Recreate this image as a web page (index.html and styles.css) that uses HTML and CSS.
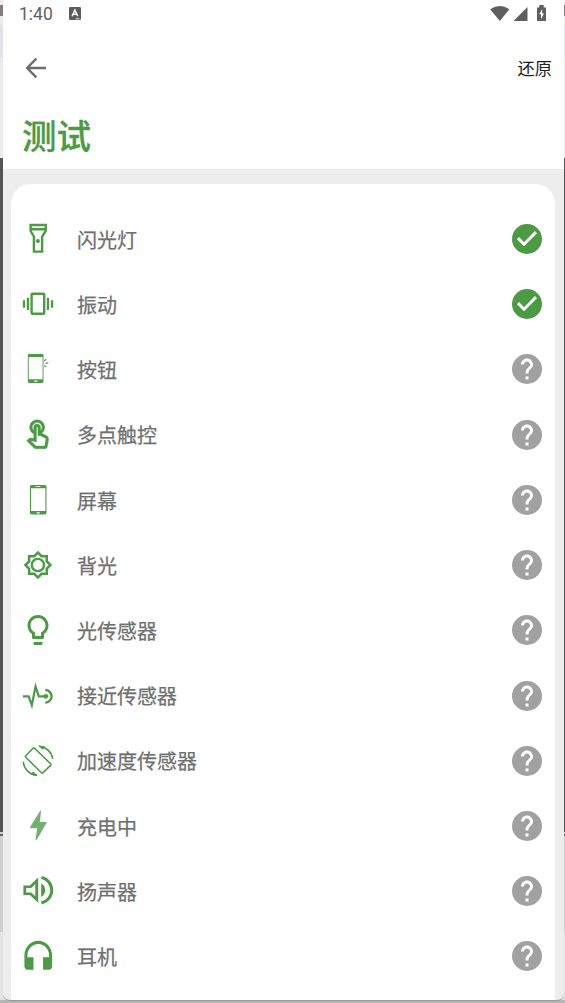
FILE: index.html
```html
<!DOCTYPE html>
<html lang="zh-CN">
<head>
<meta charset="utf-8">
<title>测试</title>
<link rel="stylesheet" href="styles.css">
</head>
<body>
<svg class="defs" aria-hidden="true">
  <symbol id="ok" viewBox="0 0 24 24"><circle cx="12" cy="12" r="10" fill="#4c9a44"/><path d="M10 16.9l-4.7-4.8 1.4-1.4 3.3 3.4 7.3-7.4L18.7 8.1z" fill="#fff"/></symbol>
  <symbol id="ask" viewBox="0 0 24 24"><circle cx="12" cy="12" r="10" fill="#a1a1a1"/><path d="M13 19h-2v-2h2zm2.07-7.75l-.9.92C13.45 12.9 13 13.5 13 15h-2v-.5c0-1.1.45-2.1 1.17-2.83l1.24-1.26c.37-.36.59-.86.59-1.41 0-1.1-.9-2-2-2s-2 .9-2 2H8c0-2.21 1.79-4 4-4s4 1.79 4 4c0 .88-.36 1.68-.93 2.25z" fill="#fff"/></symbol>
</svg>
<main class="device">
  <header class="top">
    <div class="status">
      <span class="clock">1:40</span>
      <svg class="badge" viewBox="0 0 12 14"><rect width="12" height="13" rx="1.3" fill="#5c5c5c"/><path d="M3 9.3L5.9 3l2.9 6.3M4.2 7.3h3.5" fill="none" stroke="#fff" stroke-width="1.4"/><path d="M6.5 11.8h4" stroke="#ddd" stroke-width="1"/></svg>
      <svg class="signals" viewBox="0 0 58 18">
        <g fill="#5f5f5f"><path d="M.2 4.2Q9.8-2.4 19.4 4.2L9.8 16z"/><path d="M37.5 2v14h-14z"/><path d="M47 2.5h2.2V0h4.5v2.5H56V16h-9z"/></g>
        <path d="M52.2 4l-3 5.3h1.8v4.7l3-5.6h-1.8z" fill="#fff"/>
      </svg>
    </div>
    <nav class="bar">
      <svg class="back" viewBox="0 0 22 22"><path d="M21 11H2.8M11.3 1.7L2.2 11l9.1 9.3" fill="none" stroke="#6d6d6d" stroke-width="2.4"/></svg>
      <span class="restore">还原</span>
    </nav>
    <h1 class="title">测试</h1>
  </header>
  <section class="content">
    <ul class="card">
      <li class="row"><svg class="icon" viewBox="0 0 36 36"><path class="line" d="M10.6 4h15.1v6l-3.6 5.5v15.1h-8.2V15.5L10.6 10zM10.6 8.3h15.1"/><circle cx="17.9" cy="20" r="2"/></svg><span class="label">闪光灯</span><svg class="state"><use href="#ok"/></svg></li>
      <li class="row"><svg class="icon" viewBox="0 0 36 36"><rect class="line" x="11.6" y="7.8" width="12.6" height="20" rx=".8"/><path d="M2.8 14.3h2.3v7.4H2.8zM6.8 11.8h2.3V24H6.8zM26.8 11.8h2.3V24h-2.3zM30.9 14.3h2.3v7.4h-2.3z"/></svg><span class="label">振动</span><svg class="state"><use href="#ok"/></svg></li>
      <li class="row"><svg class="icon" viewBox="0 0 36 36"><path fill-rule="evenodd" d="M9.2 3h12.9a1.4 1.4 0 0 1 1.4 1.4v26.2a1.4 1.4 0 0 1-1.4 1.4H9.2a1.4 1.4 0 0 1-1.4-1.4V4.4A1.4 1.4 0 0 1 9.2 3zM8.7 5.9v22.4h13.9V5.9zM14.3 29.4v1.4h3v-1.4z"/><path d="M24.4 10l1.8-1.8M25.6 12.2h2.7M24.4 14.4l1.8 1.6" stroke="#4c9a44" stroke-width="1.2"/></svg><span class="label">按钮</span><svg class="state"><use href="#ask"/></svg></li>
      <li class="row"><svg class="icon" viewBox="0 0 36 36"><path transform="translate(1.2 1.4) scale(1.38)" stroke="#4c9a44" stroke-width=".25" d="M18.19 12.44l-3.24-1.62c1.29-1 2.12-2.56 2.12-4.32 0-3.03-2.47-5.5-5.5-5.5s-5.5 2.47-5.5 5.5c0 2.13 1.22 3.98 3 4.89v3.26c-2.15-.46-2.02-.44-2.26-.44-.53 0-1.03.21-1.41.59L4 16.22l5.09 5.09c.43.44 1.03.69 1.65.69h6.3c.98 0 1.81-.7 1.97-1.67l.8-4.71c.22-1.3-.43-2.58-1.62-3.18zm-.35 2.85l-.8 4.71h-6.3c-.09 0-.17-.04-.24-.1l-3.68-3.68 4.25.89V6.5c0-.28.22-.5.5-.5s.5.22.5.5v6h1.76l3.46 1.73c.4.2.62.63.55 1.06zM8.07 6.5c0-1.93 1.57-3.5 3.5-3.5s3.5 1.57 3.5 3.5c0 .95-.38 1.81-1 2.44V6.5c0-1.38-1.12-2.5-2.5-2.5s-2.5 1.12-2.5 2.5v2.44c-.62-.63-1-1.49-1-2.44z"/></svg><span class="label">多点触控</span><svg class="state"><use href="#ask"/></svg></li>
      <li class="row"><svg class="icon" viewBox="0 0 36 36"><path fill-rule="evenodd" d="M11.6 3h13.2a1.7 1.7 0 0 1 1.7 1.7v26a1.7 1.7 0 0 1-1.7 1.7H11.6a1.7 1.7 0 0 1-1.7-1.7v-26A1.7 1.7 0 0 1 11.6 3zM11 6.2v22.9h14.4V6.2zM16.7 30.2v1.3h3v-1.3zM15.5 4.2v.7h5v-.7z"/></svg><span class="label">屏幕</span><svg class="state"><use href="#ask"/></svg></li>
      <li class="row"><svg class="icon" viewBox="0 0 36 36"><path transform="translate(2.8 2.9) scale(1.26)" d="M20 8.69V4h-4.69L12 .69 8.69 4H4v4.69L.69 12 4 15.31V20h4.69L12 23.31 15.31 20H20v-4.69L23.31 12 20 8.69zm-2 5.79V18h-3.52L12 20.48 9.52 18H6v-3.52L3.52 12 6 9.52V6h3.52L12 3.52 14.48 6H18v3.52L20.48 12 18 14.48z"/><circle class="line" cx="17.9" cy="18" r="6.1"/></svg><span class="label">背光</span><svg class="state"><use href="#ask"/></svg></li>
      <li class="row"><svg class="icon" viewBox="0 0 24 24"><path d="M9 21c0 .55.45 1 1 1h4c.55 0 1-.45 1-1v-1H9v1zm3-19C8.14 2 5 5.14 5 9c0 2.38 1.19 4.47 3 5.74V17c0 .55.45 1 1 1h6c.55 0 1-.45 1-1v-2.26c1.81-1.27 3-3.36 3-5.74 0-3.86-3.14-7-7-7zm2.85 11.1l-.85.6V16h-4v-2.3l-.85-.6C7.8 12.16 7 10.63 7 9c0-2.76 2.24-5 5-5s5 2.24 5 5c0 1.63-.8 3.16-2.15 4.1z"/></svg><span class="label">光传感器</span><svg class="state"><use href="#ask"/></svg></li>
      <li class="row"><svg class="icon" viewBox="0 0 36 36"><path class="line pulse" d="M2.8 18.3h5.8l3.2 8.8 3.8-18.6 3.2 9.8h7"/><circle cx="25.8" cy="18.3" r="2.4"/><path class="line" d="M25.3 12a6.3 6.3 0 1 1 0 12.6"/></svg><span class="label">接近传感器</span><svg class="state"><use href="#ask"/></svg></li>
      <li class="row"><svg class="icon" viewBox="0 0 36 36"><path class="line thin" d="M13 5.2q.8-.8 1.6 0l16 15.6q.8.8 0 1.6l-7.6 7.3q-.8.8-1.6 0L5.8 14.3q-.8-.8 0-1.6zM32.7 15.9A14.8 14.8 0 0 0 19 3.2M3.3 18.8A14.8 14.8 0 0 0 17 32.3"/><path d="M18 2.4l7.3 1.2-2.4 3.2zM18 32.8l-7.3-1.2 2.4-3.2z"/></svg><span class="label">加速度传感器</span><svg class="state"><use href="#ask"/></svg></li>
      <li class="row"><svg class="icon pale" viewBox="0 0 36 36"><path d="M20.2 2.7q1-.5.8.8l-1.2 10.6h6.3q.8.1.4.9L16.6 32q-1.3 1.1-1-.5l1.6-11.3h-6.6q-1.1-.1-.5-1.1z"/></svg><span class="label">充电中</span><svg class="state"><use href="#ask"/></svg></li>
      <li class="row"><svg class="icon" viewBox="0 0 36 36"><path fill-rule="evenodd" d="M3.4 12.4h6.4l8.4-7.8v25.2l-8.4-7.8H3.4zM6.2 15v4.4h5l4.1 3.9V11.1L11.2 15z"/><path d="M21.2 10.5q4 2.4 4 6.7t-4 6.8z"/><path class="line wave" d="M21.4 4.4a13.1 13.1 0 0 1 0 25.6"/></svg><span class="label">扬声器</span><svg class="state"><use href="#ask"/></svg></li>
      <li class="row"><svg class="icon" viewBox="0 0 36 36"><path transform="translate(-.2 -2.2) scale(1.54 1.62)" d="M12 3c-4.97 0-9 4.03-9 9v7c0 1.1.9 2 2 2h3.9v-7.8H5V12c0-3.87 3.13-7 7-7s7 3.13 7 7v1.2h-3.9V21H19c1.1 0 2-.9 2-2v-7c0-4.97-4.03-9-9-9z"/></svg><span class="label">耳机</span><svg class="state"><use href="#ask"/></svg></li>
    </ul>
  </section>
</main>
</body>
</html>
```

FILE: styles.css
```css
* { box-sizing: border-box; }

body {
  margin: 0;
  height: 1003px;
  padding: 0 1px 2px 3px;
  overflow: hidden;
  font-family: Roboto, "Noto Sans CJK SC", sans-serif;
  background: linear-gradient(#ececec 0 5px, #8a7a7e 5px 16px, #ececec 16px 25px, #e2e2ec 25px 57px, #ececec 57px 158px, #555 158px 832px, #ccc 832px 834px, #666 834px 836px, #cfcfcf 836px 932px, #e4e4e4 932px 1000px, #b5b5b5 1000px);
}

.defs { display: none; }

.device {
  height: 1001px;
  display: flex;
  flex-direction: column;
  overflow: hidden;
  background: #ededed;
  border-radius: 0 0 7px 7px;
  border-bottom: 1px solid #999;
}

.top {
  height: 169px;
  flex: none;
  background: #fff;
}

.status {
  height: 28px;
  display: flex;
  align-items: center;
  padding: 0 16px 0 16px;
}

.clock {
  font-size: 17.5px;
  color: #606060;
  line-height: 28px;
}

.badge {
  width: 12px;
  height: 14px;
  margin-left: 16px;
}

.signals {
  width: 58px;
  height: 18px;
  margin-left: auto;
}

.bar {
  height: 80px;
  display: flex;
  align-items: center;
  justify-content: space-between;
  padding: 0 12px 0 22px;
}

.back { width: 22px; height: 22px; }

.restore {
  padding-bottom: 2px;
  font-size: 17.3px;
  color: #222;
}

.title {
  margin: 0;
  padding: 1px 0 0 19px;
  font-size: 34.5px;
  line-height: 56px;
  font-weight: 500;
  color: #4c9a44;
  -webkit-text-stroke: .3px #4c9a44;
}

.content {
  flex: 1;
  min-height: 0;
  padding: 15px 9px 0 8px;
}

.card {
  height: 100%;
  margin: 0;
  padding: 22.3px 10px 0 9px;
  list-style: none;
  background: #fff;
  border-radius: 20px 20px 0 0;
}

.row {
  height: 65.24px;
  display: flex;
  align-items: center;
}

.icon {
  width: 36px;
  height: 36px;
  fill: #4c9a44;
}

.pale { fill: #74b06f; }

.line {
  fill: none;
  stroke: #4c9a44;
  stroke-width: 2.4;
}

.pulse { stroke-width: 2.2; stroke-miterlimit: 12; }
.thin { stroke-width: 1.6; }
.wave { stroke-width: 3; }

.label {
  margin-left: 21px;
  padding-top: 3.4px;
  font-size: 20px;
  line-height: 30px;
  color: #707070;
  -webkit-text-stroke: .25px #707070;
}

.state {
  width: 36px;
  height: 36px;
  margin-left: auto;
}
```
